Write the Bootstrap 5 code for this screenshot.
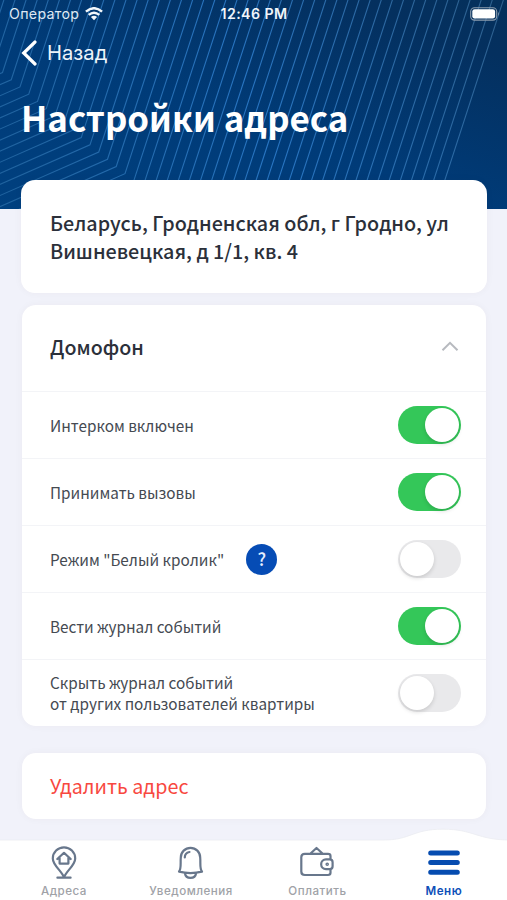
<!DOCTYPE html>
<html lang="ru">
<head>
<meta charset="utf-8">
<meta name="viewport" content="width=device-width, initial-scale=1">
<title>Настройки адреса</title>
<link href="https://cdn.jsdelivr.net/npm/bootstrap@5.3.0/dist/css/bootstrap.min.css" rel="stylesheet">
<style>
:root{--ui:"Noto Sans CJK SC","Noto Sans",sans-serif;--sys:Inter,"Liberation Sans",sans-serif}
body{background:#f1f2fa;font-family:var(--ui);width:507px;height:900px;overflow:hidden;color:#2b303a}
.hero{height:209px;background:linear-gradient(20deg,#00407f 0%,#003b78 45%,#04305f 85%,#05305b 100%)}
.pattern{position:absolute;inset:0;width:100%;height:100%}
.statusbar{height:28px;padding:0 7px 0 9px;font:400 14.2px/28px var(--sys);color:#dfe8f2;display:grid;grid-template-columns:1fr auto 1fr}
.operator{letter-spacing:.32px}
.wifi{margin-left:6px}
.clock{font-weight:600;font-size:14.2px;letter-spacing:.42px;color:#f1f5f9;margin-right:1px}
.back-link{font:400 20.2px/28px var(--sys);color:#eef4fa;padding:11px 21px 0;gap:10px}
.screen-title{font-size:34.8px;font-weight:700;line-height:52px;margin:24px 0 0 21px}
.panel{border:0;border-radius:14px;box-shadow:0 0 9px rgba(80,60,20,.04)}
.address-panel{height:113px;margin:-29px 20px 0 21px;padding:29px 29px 0;font-size:19.75px;line-height:27.5px;font-weight:500}
.intercom-panel{margin:12px 21px 0 22px;height:421px}
.panel-head{height:86px;padding:0 27px 2px 28px;font-size:19.6px;font-weight:500}
.setting{height:67.1px;border-top:1px solid #f3f4f7;padding:1px 25px 0 28px;font-size:15.3px;line-height:21px;color:#454a52}
.form-switch.toggle-wrap{padding:0;margin:0;min-height:0;position:relative;height:38px}
.toggle-wrap .toggle.form-check-input{width:63px;height:38px;margin:0;border:0;background:#e9e9eb;border-radius:19px;box-shadow:none;float:none;display:block}
.toggle-knob{position:absolute;left:2px;top:2px;width:34px;height:34px;border-radius:50%;background:#fff;box-shadow:0 2px 4px rgba(0,0,0,.14);pointer-events:none}
.toggle-wrap .toggle.form-check-input:checked{background:#34c759}
.toggle:checked + .toggle-knob{left:27px}
.help{width:31px;height:31px;background:#064cb5;font-size:17.5px;line-height:30px;font-weight:500;margin-left:22px;color:#e6f0ff}
.delete-panel{margin:27px 21px 0 22px;height:66px;padding:0 28px;color:#f8483f;font-size:19.7px}
.tabbar{height:72px;margin-top:9px}
.tabshape{position:absolute;left:0;top:0;width:507px;height:72px}
.tab-item{width:126.5px;padding-top:15px}
.tab-first{width:128px}
.tab-item svg{display:block;height:36px;width:40px}
.tab-label{font:500 11.6px/15px var(--sys);color:#a0a2a7;letter-spacing:.5px;margin-top:5px}
.tab-item.current .tab-label{color:#0d4fb8;font-weight:600}
</style>
</head>
<body>
<header class="hero position-relative text-white">
  <svg class="pattern" viewBox="0 0 507 209" fill="none">
    <defs><linearGradient id="fade" gradientUnits="userSpaceOnUse" x1="0" y1="180" x2="500" y2="0">
      <stop offset="0" stop-color="#397fb9" stop-opacity=".55"/><stop offset=".5" stop-color="#2f7fcf" stop-opacity=".85"/><stop offset="1" stop-color="#477fae" stop-opacity=".6"/>
    </linearGradient></defs>
    <path id="lines" stroke="url(#fade)" stroke-width="1.1"/>
  </svg>
  <div class="position-relative">
    <div class="statusbar align-items-center">
      <span class="d-flex align-items-center"><span class="operator">Оператор</span>
        <svg class="wifi" width="18" height="14" viewBox="0 0 18 14" fill="none" stroke="#f2f7fb" stroke-width="2.4"><path d="M.9 4.7Q9-2.3 17.1 4.7M3.7 7.9Q9 3.4 14.3 7.9"/><path d="M5.9 10.1Q9 7.6 12.1 10.1L9 13.3Z" fill="#f2f7fb" stroke="none"/></svg></span>
      <span class="clock">12:46 PM</span>
      <svg class="ms-auto" width="30" height="14" viewBox="0 0 30 14"><rect x=".7" y=".7" width="26" height="12.4" rx="3.8" fill="none" stroke="#8d9daf" stroke-width="1.1"/><rect x="2.3" y="2.3" width="22.8" height="9.2" rx="2.3" fill="#fff"/><path d="M28 4.8q1.7 2 0 4.2z" fill="#8d9daf"/></svg>
    </div>
    <div class="back-link d-flex align-items-center"><svg width="16" height="26" viewBox="0 0 16 26" fill="none" stroke="#fff" stroke-width="3.2" stroke-linecap="round"><path d="M14 2 2.700 13 14 24"/></svg><span>Назад</span></div>
    <h1 class="screen-title">Настройки адреса</h1>
  </div>
</header>
<main>
  <section class="card panel address-panel position-relative"><div>Беларусь, Гродненская обл, г Гродно, ул<br>Вишневецкая, д 1/1, кв. 4</div></section>
  <section class="card panel intercom-panel">
    <div class="panel-head d-flex align-items-center justify-content-between">Домофон
      <svg width="18" height="11" viewBox="0 0 18 11" fill="none" stroke="#b7babf" stroke-width="2"><path d="M1.5 9.3 9 1.8l7.500 7.500"/></svg></div>
    <div class="setting d-flex align-items-center justify-content-between"><span>Интерком включен</span><div class="form-check form-switch toggle-wrap"><input class="form-check-input toggle" type="checkbox" checked><span class="toggle-knob"></span></div></div>
    <div class="setting d-flex align-items-center justify-content-between"><span>Принимать вызовы</span><div class="form-check form-switch toggle-wrap"><input class="form-check-input toggle" type="checkbox" checked><span class="toggle-knob"></span></div></div>
    <div class="setting d-flex align-items-center"><span>Режим "Белый кролик"</span><span class="help rounded-circle text-center">?</span><div class="form-check form-switch toggle-wrap ms-auto"><input class="form-check-input toggle" type="checkbox"><span class="toggle-knob"></span></div></div>
    <div class="setting d-flex align-items-center justify-content-between"><span>Вести журнал событий</span><div class="form-check form-switch toggle-wrap"><input class="form-check-input toggle" type="checkbox" checked><span class="toggle-knob"></span></div></div>
    <div class="setting d-flex align-items-center justify-content-between"><span>Скрыть журнал событий<br>от других пользователей квартиры</span><div class="form-check form-switch toggle-wrap"><input class="form-check-input toggle" type="checkbox"><span class="toggle-knob"></span></div></div>
  </section>
  <section class="card panel delete-panel justify-content-center"><div>Удалить адрес</div></section>
</main>
<nav class="tabbar position-relative">
  <svg class="tabshape" viewBox="0 0 507 72"><path d="M-3 12H384C411 12 412 1.200 443 1.200S477 12 510 12V76H-3Z" fill="#fff" stroke="#ebecf1" stroke-width=".8"/></svg>
  <div class="position-relative d-flex">
    <div class="tab-item tab-first d-flex flex-column align-items-center">
      <svg viewBox="0 0 40 36" fill="none" stroke="#68778c" stroke-width="2.200" stroke-linejoin="round" stroke-linecap="round"><path d="M20 34.500C18 28 8.800 22.500 8.800 15.500A11.200 11.200 0 0 1 31.200 15.500C31.200 22.500 22 28 20 34.500ZM13.400 34.700H26.600"/><path d="M13.300 16 20 9.800 26.700 16M15.600 15V20.600H24.400V15"/></svg>
      <span class="tab-label">Адреса</span></div>
    <div class="tab-item d-flex flex-column align-items-center">
      <svg viewBox="0 0 40 36" fill="none" stroke="#68778c" stroke-width="2.200" stroke-linejoin="round" stroke-linecap="round"><path d="M8 28.600C10.500 26 9.300 20 9.800 14.500A9.700 9.700 0 0 1 29.200 14.500C29.700 20 28.500 26 31 28.600Q19.500 31.500 8 28.600ZM14 30.500C14.800 36.300 24.200 36.300 25 30.500M13.800 14.500Q13.800 9.800 18.500 9"/></svg>
      <span class="tab-label">Уведомления</span></div>
    <div class="tab-item d-flex flex-column align-items-center">
      <svg viewBox="0 0 40 36" fill="none" stroke="#68778c" stroke-width="2.200" stroke-linejoin="round" stroke-linecap="round"><path d="M33.500 16V13Q33.500 10.800 31 10.800H7.800Q4.300 10.800 4.300 14.300V28.500Q4.300 32 7.800 32H31Q33.500 32 33.500 29.800V26.500M13.500 10.500 19.500 5 25.500 10.500M29 16.400H32.800Q35.600 16.400 35.600 19.200V23.300Q35.600 26.100 32.800 26.100H29A4.850 4.850 0 0 1 29 16.400Z"/><circle cx="30.200" cy="21.300" r=".7"/></svg>
      <span class="tab-label">Оплатить</span></div>
    <div class="tab-item current d-flex flex-column align-items-center">
      <svg viewBox="0 0 40 36" stroke="#064cb0" stroke-width="5" stroke-linecap="round"><path d="M6.700 10H33.300M6.700 19.600H33.300M6.700 29.200H33.300"/></svg>
      <span class="tab-label">Меню</span></div>
  </div>
</nav>
<script>
// Parallel bent stripes of the header background
let d = '';
for (let k = -14; k <= 43; k++) {
  const x = 2.5 + 8.75 * k, y = 72.5 + 7.23 * k;
  d += `M${x - 200} ${y + 88}L${x} ${y}L${x + (y + 40) * .325} -40`;
}
document.getElementById('lines').setAttribute('d', d);
</script>
<script src="https://cdn.jsdelivr.net/npm/bootstrap@5.3.0/dist/js/bootstrap.bundle.min.js"></script>
</body>
</html>
